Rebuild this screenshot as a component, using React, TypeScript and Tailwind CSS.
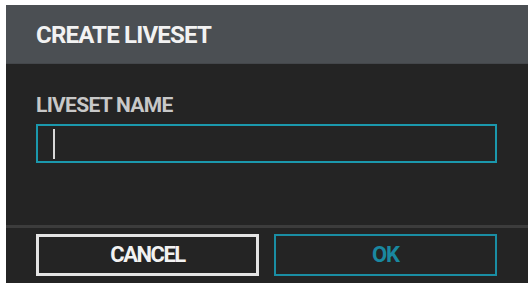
export default function App() {
  return (
    <div className="w-[532px] h-[294px] bg-white pt-[5px] pl-[6px]" style={{ fontFamily: 'Roboto, "Liberation Sans", sans-serif' }}>
      <div className="w-[522px] h-[278px] flex flex-col bg-[#242424]">
        {/* Header */}
        <div className="h-[59px] flex items-center pl-[30px] pt-[1px] bg-[#4b4f53] border-b border-[#44474b]">
          <h1 className="text-[24px] leading-[24px] font-bold tracking-[-0.8px] text-[#f2f2f2]">CREATE LIVESET</h1>
        </div>

        {/* Body */}
        <div className="h-[161px] pl-[30px] pr-[31px] pt-[31px]">
          <label className="block text-[21px] leading-[20px] font-bold tracking-[-0.7px] text-[#c8c8c8]">LIVESET NAME</label>
          <div className="mt-[9px] h-[39px] border-2 border-[#1b98ad] flex items-center pl-[15px]">
            <span className="w-[2px] h-[30px] bg-[#d8d8d8]" />
          </div>
        </div>

        {/* Divider */}
        <div className="h-[3px] bg-[#3c3c3c]" />

        {/* Footer */}
        <div className="flex gap-[15px] pl-[30px] pt-[6px]">
          <button className="w-[223px] h-[42px] border-[3px] border-[#e4e4e4] text-[22px] leading-none font-bold tracking-[-1.5px] text-[#f2f2f2]">
            CANCEL
          </button>
          <button className="w-[223px] h-[42px] border-2 border-[#1a8da3] text-[22px] leading-none font-bold tracking-[-1px] text-[#1a88a0]">
            OK
          </button>
        </div>
      </div>
    </div>
  );
}
